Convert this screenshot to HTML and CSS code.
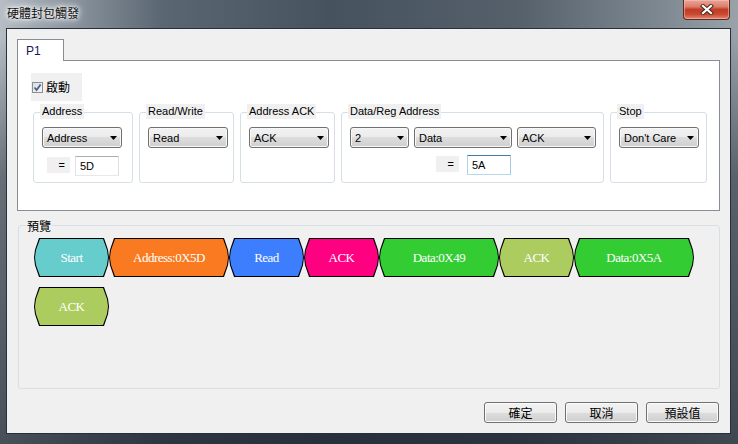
FILE: index.html
```html
<!DOCTYPE html>
<html>
<head>
<meta charset="utf-8">
<link rel="stylesheet" href="styles.css">
</head>
<body>
<div class="window">
  <div class="titlebar">
    <div class="title">硬體封包觸發</div>
    <div class="close">
      <svg width="14" height="11" viewBox="0 0 14 11"><path d="M3 2 L11 9 M11 2 L3 9" stroke="#4a2a22" stroke-width="4.2" stroke-linecap="square"/><path d="M3 2 L11 9 M11 2 L3 9" stroke="#ffffff" stroke-width="2.2" stroke-linecap="square"/></svg>
    </div>
  </div>
  <div class="client">
    <div class="tabstrip"><div class="tab">P1</div></div>
    <div class="panel">
      <div class="checkrow">
        <span class="cbox"><svg width="9" height="9" viewBox="0 0 9 9"><path d="M1.5 4.5 L3.6 7 L7.6 1.5" fill="none" stroke="#4a5f8f" stroke-width="1.8"/></svg></span>
        <span class="cblabel">啟動</span>
      </div>
      <div class="groups">
        <div class="group g-addr">
          <div class="gtitle">Address</div>
          <div class="combo w80"><span>Address</span><svg class="arrow" width="7" height="4" viewBox="0 0 7 4"><polygon points="0,0 7,0 3.5,4"/></svg></div>
          <div class="eqrow"><span class="eq">=</span><span class="input">5D</span></div>
        </div>
        <div class="group g-rw">
          <div class="gtitle">Read/Write</div>
          <div class="combo w80"><span>Read</span><svg class="arrow" width="7" height="4" viewBox="0 0 7 4"><polygon points="0,0 7,0 3.5,4"/></svg></div>
        </div>
        <div class="group g-ack">
          <div class="gtitle">Address ACK</div>
          <div class="combo w80"><span>ACK</span><svg class="arrow" width="7" height="4" viewBox="0 0 7 4"><polygon points="0,0 7,0 3.5,4"/></svg></div>
        </div>
        <div class="group g-data">
          <div class="gtitle">Data/Reg Address</div>
          <div class="comborow">
            <div class="combo w59"><span>2</span><svg class="arrow" width="7" height="4" viewBox="0 0 7 4"><polygon points="0,0 7,0 3.5,4"/></svg></div>
            <div class="combo w98"><span>Data</span><svg class="arrow" width="7" height="4" viewBox="0 0 7 4"><polygon points="0,0 7,0 3.5,4"/></svg></div>
            <div class="combo w79"><span>ACK</span><svg class="arrow" width="7" height="4" viewBox="0 0 7 4"><polygon points="0,0 7,0 3.5,4"/></svg></div>
          </div>
          <div class="eqrow wide"><span class="eq">=</span><span class="input focus">5A</span></div>
        </div>
        <div class="group g-stop">
          <div class="gtitle">Stop</div>
          <div class="combo w80"><span>Don't Care</span><svg class="arrow" width="7" height="4" viewBox="0 0 7 4"><polygon points="0,0 7,0 3.5,4"/></svg></div>
        </div>
      </div>
    </div>
    <div class="preview">
      <div class="ptitle">預覽</div>
      <div class="chips">
        <div class="chip short"><div class="chip-in c-start">Start</div></div>
        <div class="chip long"><div class="chip-in c-orange">Address:0X5D</div></div>
        <div class="chip short"><div class="chip-in c-blue">Read</div></div>
        <div class="chip short"><div class="chip-in c-pink">ACK</div></div>
        <div class="chip long"><div class="chip-in c-green">Data:0X49</div></div>
        <div class="chip short"><div class="chip-in c-olive">ACK</div></div>
        <div class="chip long"><div class="chip-in c-green">Data:0X5A</div></div>
        <div class="chip short"><div class="chip-in c-olive">ACK</div></div>
      </div>
    </div>
    <div class="buttons">
      <div class="btn">確定</div>
      <div class="btn">取消</div>
      <div class="btn">預設值</div>
    </div>
  </div>
</div>
</body>
</html>
```
FILE: styles.css
```css
* { box-sizing: border-box; }
html, body { margin: 0; padding: 0; }
body {
  width: 738px;
  height: 444px;
  overflow: hidden;
  font-family: "Liberation Sans", "Noto Sans CJK TC", sans-serif;
  font-size: 11px;
  color: #000;
}
.window {
  width: 738px;
  height: 444px;
  display: flex;
  flex-direction: column;
  background:
    linear-gradient(to bottom, rgba(0,0,0,0) 0, rgba(0,0,0,0) 8%, rgba(25,33,43,0.5) 40%, rgba(25,33,43,0.7) 100%),
    linear-gradient(to right, #b6bdc4 0, #9ea7b0 5%, #5a6672 22%, #46525e 45%, #55606b 70%, #7f8992 90%, #9aa2a9 100%);
}
.titlebar {
  height: 28px;
  flex: none;
  display: flex;
  justify-content: space-between;
  align-items: flex-start;
}
.title {
  padding: 5px 0 0 7px;
  font-family: "Noto Sans CJK TC", sans-serif;
  font-size: 12px;
  line-height: 16px;
  color: #111;
  text-shadow: 0 0 6px #fff, 0 0 10px rgba(255,255,255,0.9), 0 0 3px #fff;
}
.close {
  width: 47px;
  height: 20px;
  margin-right: 8px;
  border: 1px solid #5b2a22;
  border-top: none;
  border-radius: 0 0 4px 4px;
  background: linear-gradient(to bottom, #e9a698 0, #db7e6c 35%, #c23c28 50%, #c9472f 75%, #e08a74 100%);
  display: flex;
  align-items: center;
  justify-content: center;
  box-shadow: inset 0 0 0 1px rgba(255,200,190,0.5);
}
.client {
  flex: 1;
  margin: 0 7px 10px 6px;
  border: 1px solid #26313d;
  background: #f0f0f0;
  padding: 10px 10px 0 10px;
  display: flex;
  flex-direction: column;
}
.tabstrip { display: flex; height: 21px; }
.tab {
  position: relative;
  z-index: 1;
  width: 47px;
  height: 22px;
  border: 1px solid #898c95;
  border-bottom: none;
  background: #fff;
  padding-left: 8px;
  line-height: 22px;
  font-size: 12px;
  color: #14145a;
}
.panel {
  height: 151px;
  border: 1px solid #898c95;
  background: #fff;
}
.checkrow {
  margin: 12px 0 0 13px;
  width: 51px;
  height: 28px;
  background: #f0f0f0;
  display: flex;
  align-items: center;
  padding-left: 1px;
}
.cbox {
  width: 11px;
  height: 11px;
  border: 1px solid #8e8f8f;
  background: linear-gradient(135deg, #d9dde3 0, #f4f5f7 100%);
  display: flex;
  align-items: center;
  justify-content: center;
}
.cblabel {
  margin-left: 3px;
  font-family: "Noto Sans CJK TC", sans-serif;
  font-size: 12px;
  line-height: 16px;
}
.groups {
  display: flex;
  gap: 6px;
  margin: 11px 0 0 15px;
}
.group {
  height: 71px;
  border: 1px solid #d5dfe5;
  border-radius: 3px;
  display: flex;
  flex-direction: column;
  align-items: flex-start;
  padding: 0 8px;
}
.g-addr { width: 100px; }
.g-rw { width: 95px; }
.g-ack { width: 95px; }
.g-data { width: 263px; padding-right: 6px; }
.g-stop { width: 97px; }
.gtitle {
  margin: -9px 0 0 -2px;
  height: 15px;
  line-height: 15px;
  padding: 0 2px;
  background: #f0f0f0;
  white-space: nowrap;
}
.combo, .comborow { margin-top: 8px; }
.comborow { display: flex; gap: 5px; }
.comborow .combo { margin-top: 0; }
.combo {
  height: 21px;
  border: 1px solid #707070;
  border-radius: 3px;
  background: linear-gradient(to bottom, #f2f2f2 0, #ebebeb 50%, #dddddd 50%, #cfcfcf 100%);
  box-shadow: inset 0 0 0 1px #f8f8f8;
  display: flex;
  align-items: center;
  justify-content: space-between;
  padding: 0 4px 0 4px;
  white-space: nowrap;
}
.w80 { width: 80px; }
.w59 { width: 59px; }
.w98 { width: 98px; }
.w79 { width: 79px; }
.arrow { fill: #000; flex: none; }
.eqrow {
  align-self: stretch;
  display: flex;
  justify-content: center;
  gap: 5px;
  margin-top: 8px;
}
.eqrow.wide { gap: 8px; margin-top: 7px; }
.eq {
  width: 23px;
  height: 16px;
  margin-top: 1px;
  background: #f0f0f0;
  text-align: right;
  padding-right: 5px;
  line-height: 16px;
}
.input {
  width: 44px;
  height: 20px;
  border: 1px solid;
  border-color: #abadb3 #dbdfe6 #e3e9ef #e2e3ea;
  background: #fff;
  padding-left: 4px;
  line-height: 18px;
}
.input.focus { border-color: #3d7bad #a4c9e3 #b7d9ed #b5cfe7; }
.preview {
  margin: 14px 0 0 1px;
  height: 164px;
  border: 1px solid #d8e0e6;
  border-radius: 3px;
  display: flex;
  flex-direction: column;
  align-items: flex-start;
}
.ptitle {
  margin: -8px 0 0 7px;
  height: 15px;
  line-height: 15px;
  padding: 0 1px;
  background: #f0f0f0;
  font-family: "Noto Sans CJK TC", sans-serif;
  font-size: 12px;
}
.chips {
  margin: 5px 0 0 15px;
  width: 680px;
  display: flex;
  flex-wrap: wrap;
  row-gap: 10px;
}
.chip {
  height: 39px;
  background: #000;
  padding: 1px;
  display: flex;
  clip-path: polygon(5px 0, calc(100% - 5px) 0, calc(100% - 1px) 30%, 100% 50%, calc(100% - 1px) 70%, calc(100% - 5px) 100%, 5px 100%, 1px 70%, 0 50%, 1px 30%);
}
.chip.short { width: 75px; }
.chip.long { width: 120px; }
.chip-in {
  flex: 1;
  display: flex;
  align-items: center;
  justify-content: center;
  color: #fff;
  font-family: "Liberation Serif", serif;
  font-size: 13px;
  letter-spacing: -0.5px;
  clip-path: polygon(5px 0, calc(100% - 5px) 0, calc(100% - 1px) 30%, 100% 50%, calc(100% - 1px) 70%, calc(100% - 5px) 100%, 5px 100%, 1px 70%, 0 50%, 1px 30%);
}
.c-start { background: #66cccc; }
.c-orange { background: #f97a20; }
.c-blue { background: #3d7eff; }
.c-pink { background: #ff0080; }
.c-green { background: #33cc33; }
.c-olive { background: #adcc60; }
.buttons {
  margin-top: 13px;
  display: flex;
  justify-content: flex-end;
  gap: 8px;
  padding-right: 1px;
}
.btn {
  width: 73px;
  height: 21px;
  border: 1px solid #707070;
  border-radius: 3px;
  background: linear-gradient(to bottom, #f2f2f2 0, #ebebeb 50%, #dddddd 50%, #cfcfcf 100%);
  box-shadow: inset 0 0 0 1px #fbfbfb;
  font-family: "Noto Sans CJK TC", sans-serif;
  font-size: 12px;
  line-height: 19px;
  text-align: center;
}
```
